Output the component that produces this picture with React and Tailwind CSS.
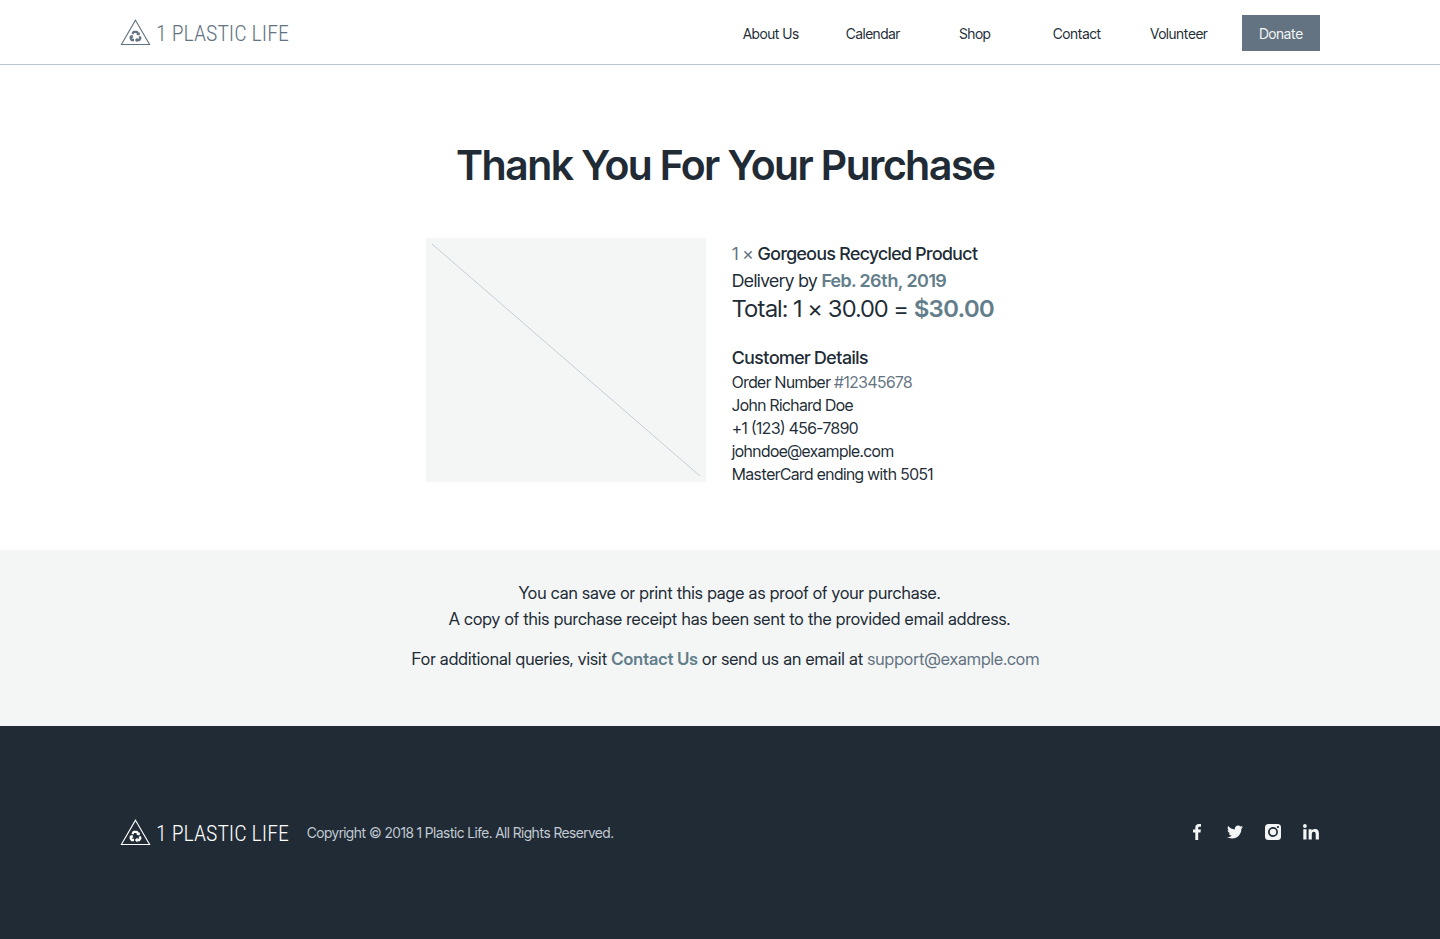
import React from "react";
import { FaTwitter } from "react-icons/fa";

const navLinks = ["About Us", "Calendar", "Shop", "Contact", "Volunteer"];

function Logo({ className }) {
  return (
    <a href="#" aria-label="1 Plastic Life" className={`flex items-center gap-[5px] ${className}`}>
      <svg width="31" height="27" viewBox="0 0 31 27" fill="none" aria-hidden="true">
        <path d="M15.5 1.2 29.6 25.5H1.4Z" stroke="currentColor" strokeWidth="1.1" />
        <path
          d="M12.4 15 13.7 12.9H16.9L18.2 14.8M19.6 17.4 20.4 19.2 19.2 21H17M14 21H11.8L10.6 19.2 11.4 17.4"
          stroke="currentColor"
          strokeWidth="2.3"
          strokeLinejoin="round"
        />
        <path
          d="M20 13.2 19.6 16.6 16.2 15.8ZM17.4 18.4V23.4L14.8 20.9ZM9 17.3 12.4 15.8 13.4 19Z"
          fill="currentColor"
        />
      </svg>
      <span className="pt-1 font-['Roboto_Condensed','Inter_Tight',sans-serif] text-[22px] leading-7 font-light whitespace-nowrap">
        1 PLASTIC LIFE
      </span>
    </a>
  );
}

function FacebookIcon() {
  return (
    <svg width="8" height="16" viewBox="0 0 8 16" fill="currentColor" aria-hidden="true">
      <path d="M8 .1v2.6H6.5C5.5 2.7 5.2 3.2 5.2 4v1.6h2.7L7.5 8.4H5.2V16H2.3V8.4H0V5.6h2.3v-2C2.3 1.3 3.7 0 5.9 0 6.9 0 7.7.1 8 .1Z" />
    </svg>
  );
}

function InstagramIcon() {
  return (
    <svg width="16" height="16" viewBox="0 0 16 16" aria-hidden="true">
      <rect width="16" height="16" rx="3.5" fill="currentColor" />
      <circle cx="8" cy="8" r="4.1" fill="none" stroke="#212b35" strokeWidth="1.7" />
      <circle cx="12.9" cy="3" r="1.1" fill="#212b35" />
    </svg>
  );
}

function LinkedInIcon() {
  return (
    <svg width="16" height="16" viewBox="0 0 16 16" fill="currentColor" aria-hidden="true">
      <circle cx="1.9" cy="2" r="1.9" />
      <path d="M.3 5.3h3.2v10.3H.3ZM5.6 5.3h3v1.4c.5-.9 1.6-1.7 3.2-1.7 3.3 0 4.1 2 4.1 4.9v5.7h-3.2v-5c0-1.3 0-2.9-1.8-2.9s-2.1 1.4-2.1 2.8v5.1H5.6Z" />
    </svg>
  );
}

const socials = [
  { name: "Facebook", icon: <FacebookIcon /> },
  { name: "Twitter", icon: <FaTwitter size={16} /> },
  { name: "Instagram", icon: <InstagramIcon /> },
  { name: "LinkedIn", icon: <LinkedInIcon /> },
];

export default function App() {
  return (
    <div className="bg-white font-['Inter_Tight',Inter,sans-serif] text-[#212b35]">
      <header className="border-b border-[#b9c7d1]">
        <div className="mx-auto flex h-16 max-w-[1200px] items-center justify-between">
          <Logo className="text-[#637381]" />
          <nav className="flex items-center pt-0.5 text-[14px]">
            {navLinks.map((label) => (
              <a key={label} href="#" className="w-[102px] text-center">
                {label}
              </a>
            ))}
            <button type="button" className="ml-3 h-9 w-[78px] bg-[#637381] text-[#f4f6f6]">
              Donate
            </button>
          </nav>
        </div>
      </header>

      <main>
        <section className="mx-auto box-content max-w-[600px] pt-[74px] pb-16 pl-3">
          <h1 className="text-center text-[41px] leading-[52px] font-semibold">
            Thank You For Your Purchase
          </h1>
          <div className="mt-[47px] flex items-start gap-[26px]">
            <svg className="shrink-0 bg-[#f4f6f6]" width="280" height="244" role="img" aria-label="Product">
              <path d="M6 6 274 238" stroke="#c4cdd5" />
            </svg>
            <div className="pt-[3px] whitespace-nowrap">
              <p className="text-[18px] leading-[26px]">
                <span className="text-[#637381]">1 ×</span>{" "}
                <span className="font-medium">Gorgeous Recycled Product</span>
              </p>
              <p className="text-[18px] leading-7">
                Delivery by <span className="font-semibold text-[#637e8a]">Feb. 26th, 2019</span>
              </p>
              <p className="text-[24px] leading-7">
                Total: 1 × 30.00 = <span className="font-semibold text-[#637e8a]">$30.00</span>
              </p>
              <h2 className="mt-[22px] text-[18px] leading-[26px] font-medium">Customer Details</h2>
              <div className="text-[16px] leading-[23px]">
                <p>
                  Order Number <span className="text-[#637381]">#12345678</span>
                </p>
                <p>John Richard Doe</p>
                <p>+1 (123) 456-7890</p>
                <p>johndoe@example.com</p>
                <p>MasterCard ending with 5051</p>
              </div>
            </div>
          </div>
        </section>

        <section className="bg-[#f4f6f6] pt-[30px] pb-[54px] pl-[11px] text-center font-['Inter_Display','Inter_Tight',sans-serif] text-[17px] leading-[26px]">
          <div className="pl-2">
            <p>You can save or print this page as proof of your purchase.</p>
            <p>A copy of this purchase receipt has been sent to the provided email address.</p>
          </div>
          <p className="mt-3.5">
            For additional queries, visit{" "}
            <a href="#" className="font-semibold text-[#637e8a]">Contact Us</a> or send us an email at{" "}
            <a href="mailto:support@example.com" className="text-[#637381]">support@example.com</a>
          </p>
        </section>
      </main>

      <footer className="bg-[#212b35] pt-[90px] pb-[91px]">
        <div className="mx-auto flex max-w-[1200px] items-center justify-between">
          <div className="flex items-center gap-[18px]">
            <Logo className="text-white" />
            <p className="pt-0.5 text-[14px] leading-5 text-[#c4cdd5]">Copyright © 2018 1 Plastic Life. All Rights Reserved.</p>
          </div>
          <div className="flex gap-5 text-[#f4f6f6]">
            {socials.map(({ name, icon }) => (
              <a key={name} href="#" aria-label={name} className="flex h-[18px] w-[18px] items-center justify-center">
                {icon}
              </a>
            ))}
          </div>
        </div>
      </footer>
    </div>
  );
}
